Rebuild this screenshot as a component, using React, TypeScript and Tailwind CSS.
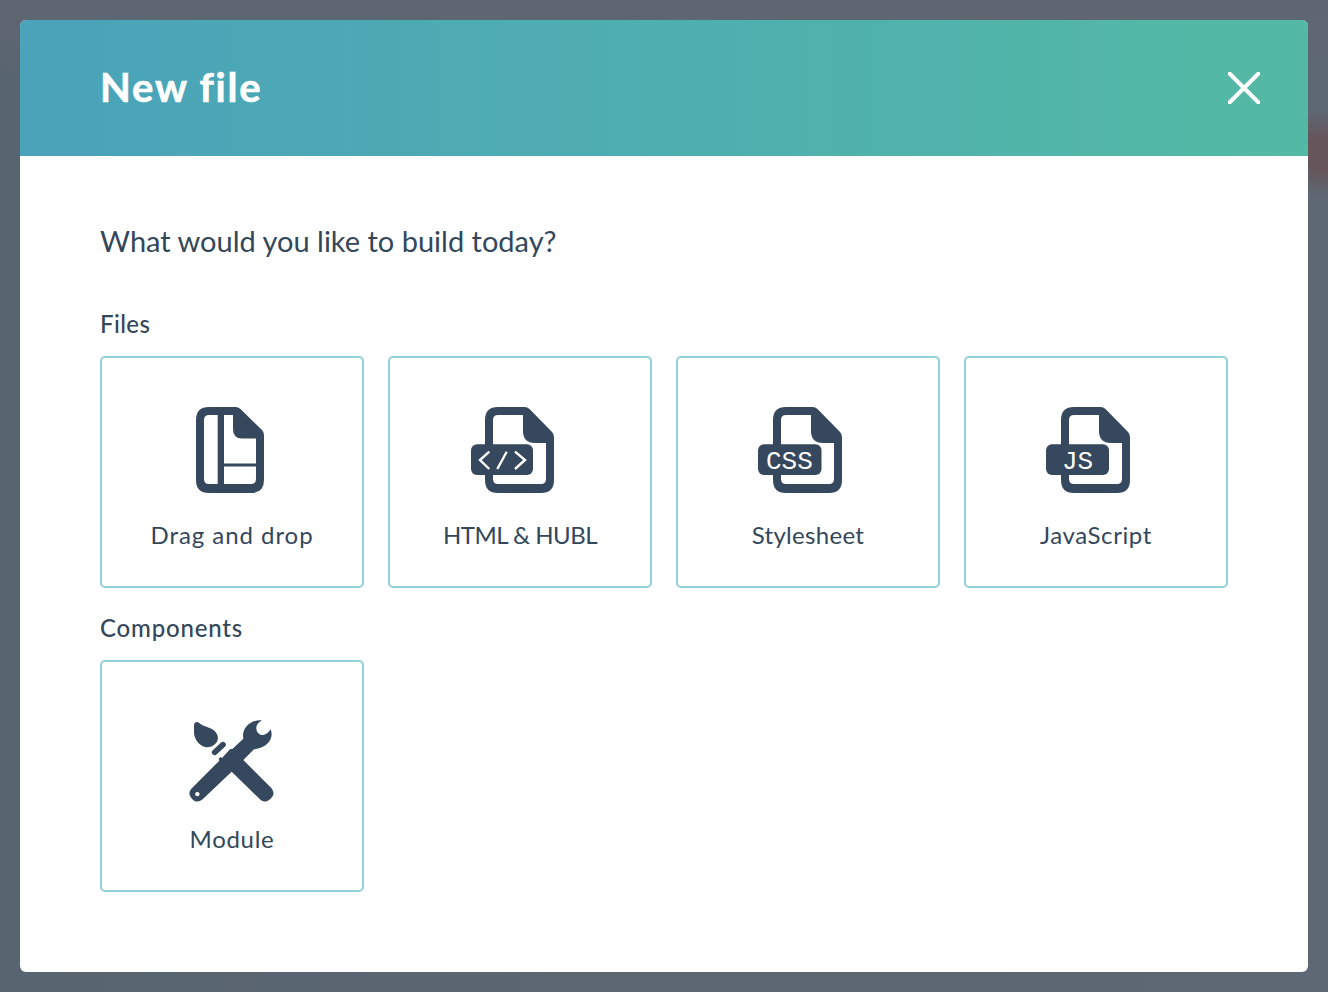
import React from "react";

const ink = "#35485d";
const FILE_D =
  "M13 7H40Q43 7 45 9.500L67 32Q69 34 69 37V80Q69 93 56 93H13Q0 93 0 80V20Q0 7 13 7ZM13 15Q8 15 8 20V79Q8 84 13 84H56Q61 84 61 79V43H50Q38 43 38 31V15Z";

function FileIcon({ fx, bx, bw, children }: { fx: number; bx: number; bw: number; children: React.ReactNode }) {
  return (
    <svg width="100" height="100" viewBox="0 0 100 100" className="block">
      <path d={FILE_D} fill={ink} fillRule="evenodd" transform={`translate(${fx} 0)`} />
      <rect x={bx} y="44.300" width={bw} height="30.700" rx="6" fill={ink} />
      {children}
    </svg>
  );
}

function DragIcon() {
  return (
    <svg width="100" height="100" viewBox="0 0 100 100" className="block">
      <path
        fill={ink}
        fillRule="evenodd"
        transform="translate(8 0)"
        d="M19 7H46Q49 7 51 9.500L72 30Q74 32 74 35V80Q74 93 61 93H19Q6 93 6 80V20Q6 7 19 7ZM19 15Q14 15 14 20V79Q14 84 19 84H27.700V15ZM34 15V63.500H66V38.500H52Q43 38.500 43 29V15ZM34 66.500V84H61Q66 84 66 79V66.500Z"
      />
    </svg>
  );
}

function ModuleIcon() {
  return (
    <svg width="100" height="100" viewBox="0 0 100 100" className="block">
      <g transform="translate(-2 6) scale(0.3333)" fill={ink}>
        <path d="M42 44C44 34 52 34 58 39C68 49 82 50 94 56C110 64 116 78 113 90C108 106 90 114 76 111C56 107 44 88 42 70Z" />
        <path d="M104 127L129 104" stroke={ink} strokeWidth="17" strokeLinecap="round" fill="none" />
        <path
          fillRule="evenodd"
          d="M34 236L118 152L116 146L122 141L126 144L150 118L158 116L190 86C184 60 205 28 246 31C234 38 228 46 229 56C230 68 240 76 250 75C258 74 266 68 272 58C282 84 266 112 222 118L190 150L274 234C284 248 282 256 272 266C258 278 248 276 240 268L155 185L68 268C54 278 44 276 36 266C26 254 26 246 34 236ZM52 246A6.500 6.500 0 1 0 52.010 246Z"
        />
      </g>
    </svg>
  );
}

function Card({ label, tracking, children }: { label: string; tracking: string; children: React.ReactNode }) {
  return (
    <div className="w-[264px] h-[232px] box-border border-2 border-[#8fd1dc] rounded-[5px] bg-white flex flex-col items-center pt-[42px]">
      {children}
      <div className={`mt-[19px] text-[24px] leading-[32px] text-[#33475b] ${tracking}`}>{label}</div>
    </div>
  );
}

export default function App() {
  return (
    <div
      className="w-[1328px] h-[992px] overflow-hidden box-border pt-[20px] px-[20px] bg-[radial-gradient(ellipse_70px_45px_at_1330px_153px,#66565c_40%,transparent),linear-gradient(180deg,#5f6672_0%,transparent_8%),linear-gradient(90deg,#58646f_0%,#5e6874_100%)]"
      style={{ fontFamily: '"Lato", "Open Sans", sans-serif' }}
    >
      <div className="w-[1288px] h-[952px] bg-white rounded-[6px] overflow-hidden">
        <header className="h-[136px] pl-[80px] pr-[48px] flex items-center justify-between bg-gradient-to-r from-[#4aa3ba] to-[#54b9a4]">
          <h1 className="pb-[2px] text-[40px] leading-[48px] font-bold text-white tracking-[1.8px] [-webkit-text-stroke:0.6px_#fff]">New file</h1>
          <svg width="32" height="32" viewBox="0 0 32 32">
            <path d="M1.500 1.500L30.500 30.500M30.500 1.500L1.500 30.500" stroke="#fff" strokeWidth="4" strokeLinecap="round" />
          </svg>
        </header>
        <main className="px-[80px] pt-[66px]">
          <p className="text-[29px] leading-[38px] text-[#33475b]">What would you like to build today?</p>
          <h2 className="mt-[48px] text-[24px] leading-[32px] font-medium text-[#33475b] tracking-[0.4px]">Files</h2>
          <div className="mt-[16px] flex gap-[24px]">
            <Card label="Drag and drop" tracking="tracking-[0.95px]"><DragIcon /></Card>
            <Card label="HTML & HUBL" tracking="tracking-[-0.5px]">
              <FileIcon fx={15} bx={1} bw={62}>
                <path d="M19.300 51.700L10 60L19.300 69M36.700 51.700L27.300 69M45 51.700L55 60L45 69" fill="none" stroke="#fff" strokeWidth="2.400" />
              </FileIcon>
            </Card>
            <Card label="Stylesheet" tracking="tracking-[0.3px]">
              <FileIcon fx={15} bx={0} bw={63.500}>
                <text x="8" y="69" fill="#fff" fontSize="26" fontFamily='"Liberation Mono", monospace'>CSS</text>
              </FileIcon>
            </Card>
            <Card label="JavaScript" tracking="tracking-[0.6px]">
              <FileIcon fx={15} bx={0} bw={63}>
                <text x="16" y="69" fill="#fff" fontSize="26" fontFamily='"Liberation Mono", monospace'>JS</text>
              </FileIcon>
            </Card>
          </div>
          <h2 className="mt-[24px] text-[24px] leading-[32px] font-medium text-[#33475b] tracking-[0.8px]">Components</h2>
          <div className="mt-[16px] flex gap-[24px]">
            <Card label="Module" tracking="tracking-[0.7px]"><ModuleIcon /></Card>
          </div>
        </main>
      </div>
    </div>
  );
}
